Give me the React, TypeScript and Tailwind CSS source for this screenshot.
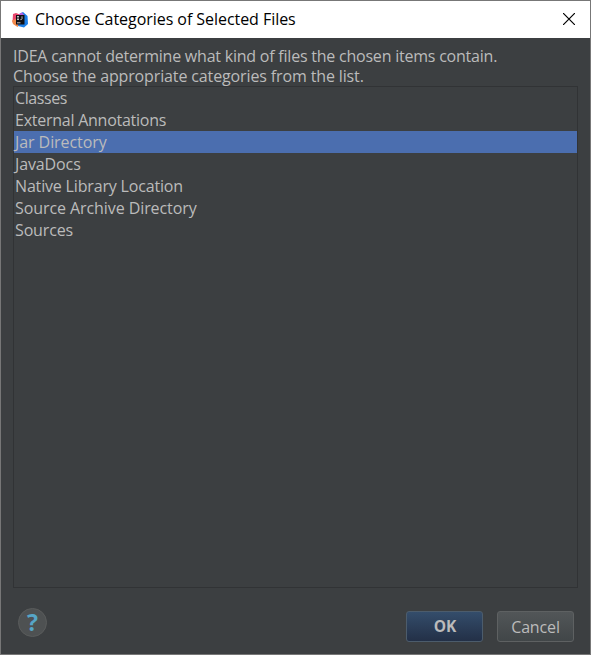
import React from "react";

const categories: { name: string; spacing: string }[] = [
  { name: "Classes", spacing: "tracking-[-0.4px]" },
  { name: "External Annotations", spacing: "tracking-[-0.25px]" },
  { name: "Jar Directory", spacing: "tracking-[-0.07px]" },
  { name: "JavaDocs", spacing: "tracking-[-0.12px]" },
  { name: "Native Library Location", spacing: "tracking-[-0.17px]" },
  { name: "Source Archive Directory", spacing: "tracking-[-0.08px]" },
  { name: "Sources", spacing: "tracking-[-0.14px]" },
];

function IdeaLogo() {
  return (
    <svg width="16" height="16" viewBox="0 0 16 16" className="shrink-0">
      <path d="M1 2 4 1l5 2-2 6-5 3-1.500-2z" fill="#e8476d" />
      <path d="M0 8.500 4 7l4 5-2.500 3L1 12z" fill="#f28a4b" />
      <path d="M8 1.500 11 0l4.500 4L16 12l-4 3.500L6 14z" fill="#1c7fe8" />
      <path d="M7 2 10 .5 12 3 8 5z" fill="#b65be0" />
      <rect x="4" y="3" width="8.500" height="9.500" fill="#101016" />
      <path d="M5 4.500h2M6 4.500v3M5 7.500h2M10 4.300v2.600q0 .8-1.600.7" stroke="#bbb" strokeWidth="1" fill="none" />
      <path d="M5 10.800h3.500" stroke="#bbb" strokeWidth="1" />
    </svg>
  );
}

export default function App() {
  return (
    <div className="flex h-[655px] w-[591px] flex-col border border-[#777777] bg-[#3c3f41] font-['Open_Sans','Noto_Sans',sans-serif] text-[16px] text-[#bbbbbb]">
      <header className="flex h-[37px] shrink-0 items-center bg-white pl-[11px] pr-[15px] text-black">
        <IdeaLogo />
        <h1 className="-mt-px ml-[7px] grow whitespace-nowrap text-[16px] leading-5 tracking-[-0.05px]">Choose Categories of Selected Files</h1>
        <button aria-label="Close" className="-mt-px">
          <svg width="12" height="12" viewBox="0 0 12 12">
            <path d="M0 0 12 12M12 0 0 12" stroke="#000" strokeWidth="1.200" />
          </svg>
        </button>
      </header>
      <main className="flex grow flex-col px-3 pt-[8px]">
        <div className="h-[40px] whitespace-nowrap leading-5">
          <p className="tracking-[-0.22px]">IDEA cannot determine what kind of files the chosen items contain.</p>
          <p className="tracking-[-0.13px]">Choose the appropriate categories from the list.</p>
        </div>
        <ul className="h-[502px] w-[565px] border border-[#313335]">
          {categories.map(({ name, spacing }) => (
            <li
              key={name}
              className={`h-[22px] whitespace-nowrap pl-px leading-[22px] ${spacing} ${name === "Jar Directory" ? "bg-[#4b6eaf]" : ""}`}
            >
              {name}
            </li>
          ))}
        </ul>
        <footer className="mt-[20px] flex items-start pl-[5px] pr-[4px]">
          <button className="flex size-[29px] items-center justify-center rounded-full border border-[#5a5c5c] bg-[#4e5152] text-[23px] font-bold leading-none text-[#56a5c6]">
            ?
          </button>
          <div className="ml-auto mt-[3px] flex gap-[14px]">
            <button className="h-[31px] w-[77px] rounded-[3px] border border-[#4c5c6c] bg-linear-to-b from-[#344d6b] to-[#233047] pl-px text-[15.5px] font-bold">OK</button>
            <button className="h-[31px] w-[77px] rounded-[3px] border border-[#5e6162] bg-linear-to-b from-[#525658] to-[#414648] text-[16px] tracking-[-0.15px]">Cancel</button>
          </div>
        </footer>
      </main>
    </div>
  );
}
